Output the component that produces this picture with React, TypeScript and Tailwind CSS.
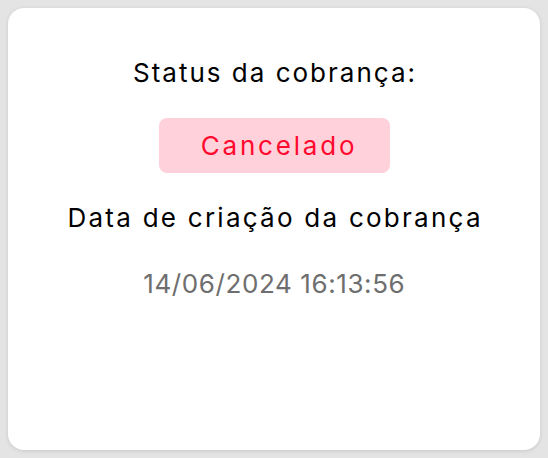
export default function App() {
  return (
    <div className="w-[548px] h-[458px] bg-[#e4e4e4] p-2" style={{ fontFamily: "Inter, 'Noto Sans', sans-serif" }}>
      <div className="h-[442px] w-[532px] rounded-2xl bg-white shadow-[0_1px_4px_rgba(0,0,0,0.12)] flex flex-col items-center pt-[47px]">
        <div className="text-[26px] leading-[36px] text-black tracking-[2px] pl-[2px]">Status da cobrança:</div>
        <div className="mt-[27px] w-[231px] h-[55px] rounded-lg bg-[#ffd1db] flex items-center justify-center text-[26px] text-[#ff0a2e] tracking-[2.8px] pl-[10px]">
          Cancelado
        </div>
        <div className="mt-[27px] text-[26px] leading-[36px] text-black tracking-[2.25px] pl-[2.25px]">Data de criação da cobrança</div>
        <div className="mt-[30px] text-[26px] leading-[36px] text-[#6e6e6e] tracking-[0.6px] pl-[0.6px]">14/06/2024 16:13:56</div>
      </div>
    </div>
  );
}
